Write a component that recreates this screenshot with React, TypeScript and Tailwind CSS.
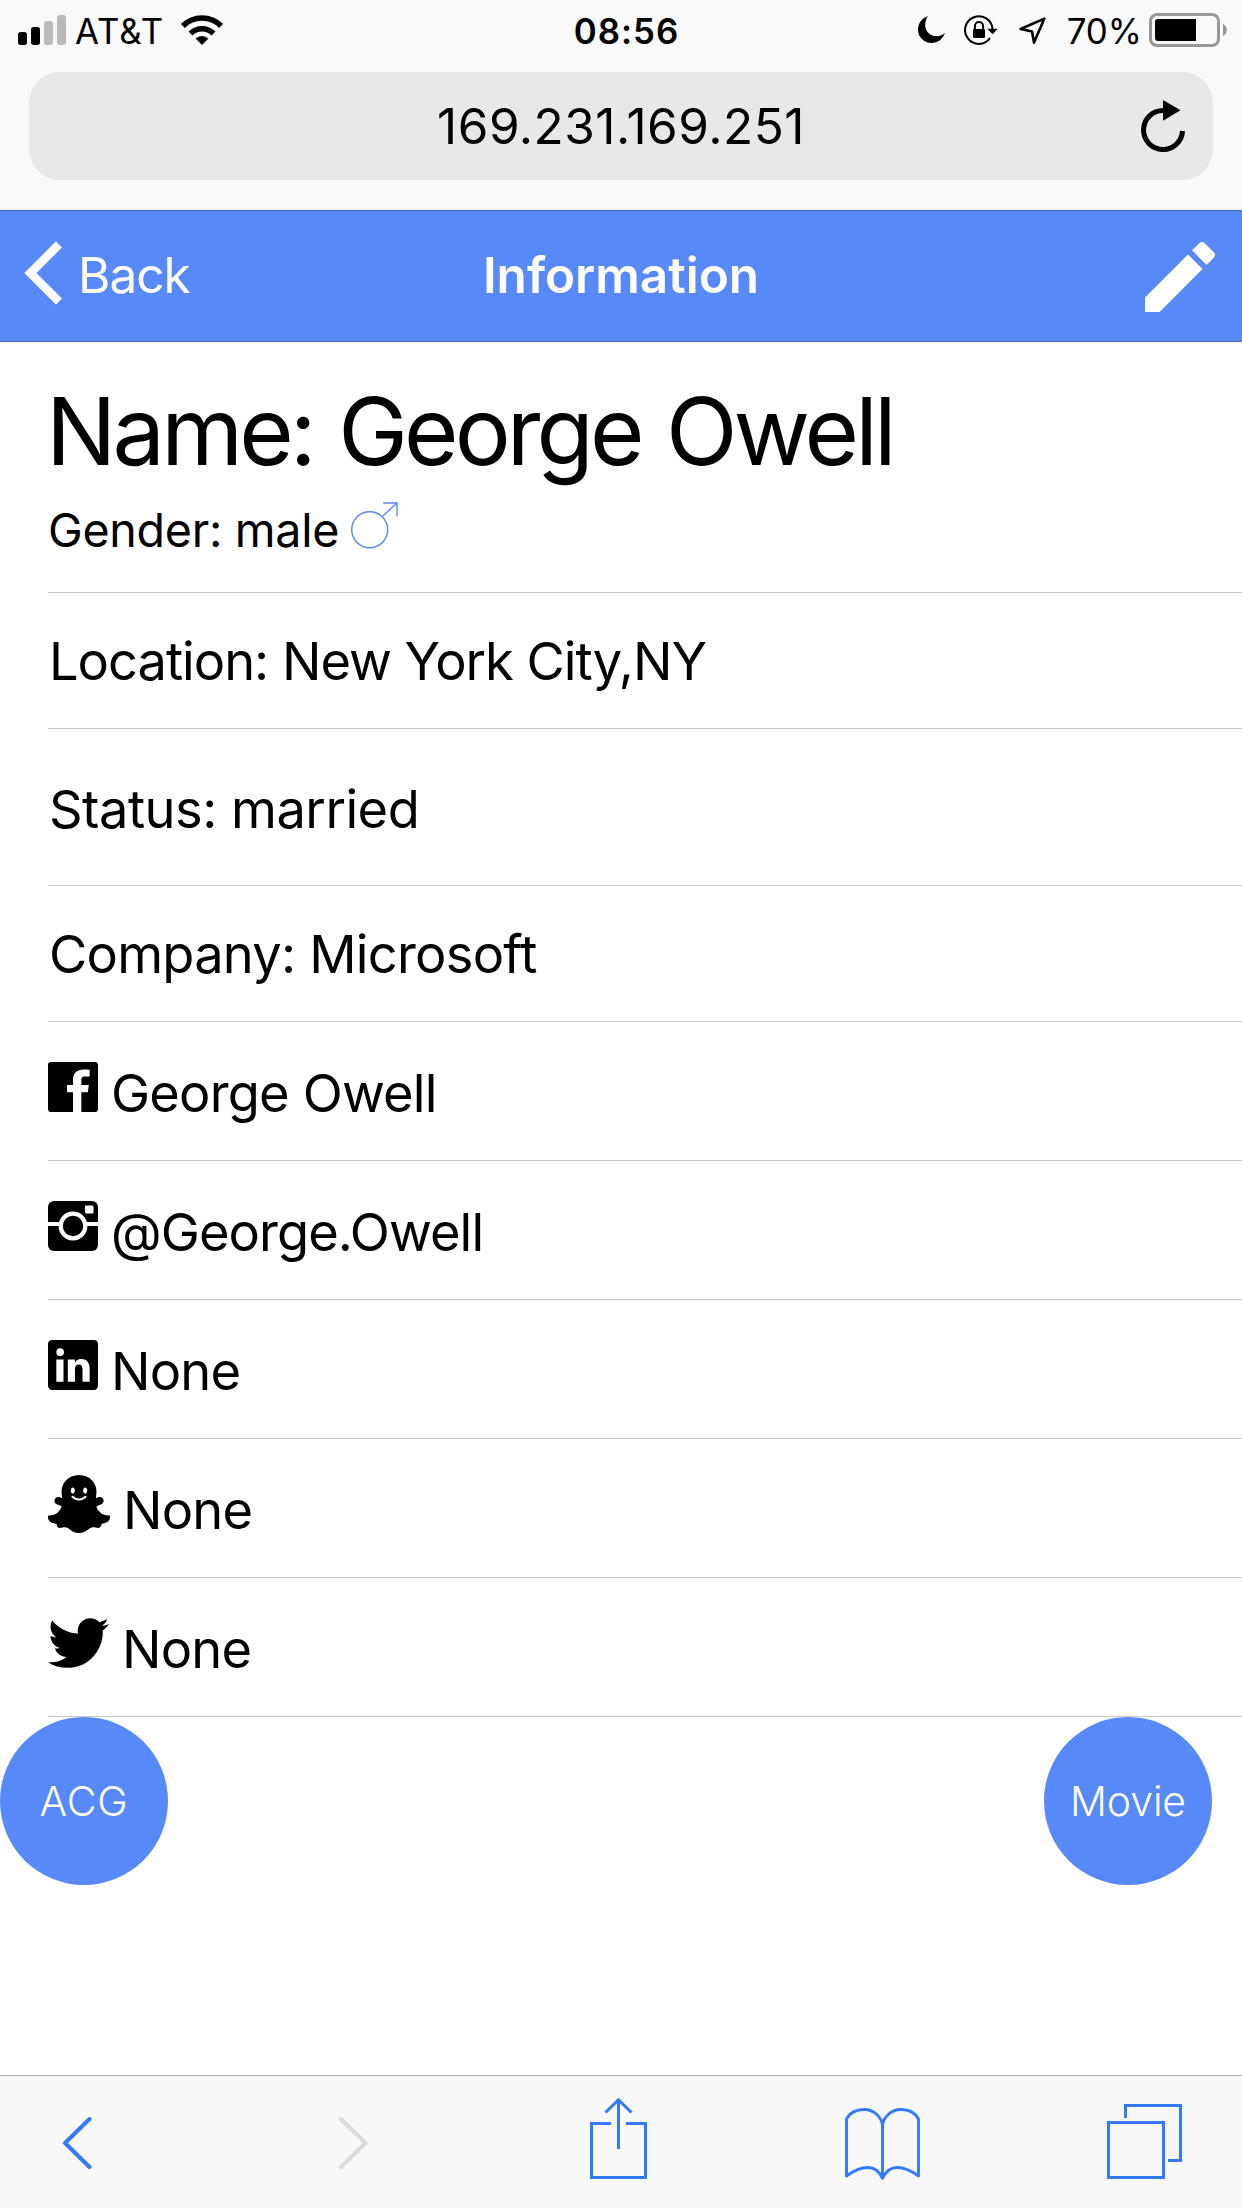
import React from 'react';
import { IoLogoFacebook, IoLogoLinkedin, IoLogoSnapchat, IoLogoTwitter, IoMdCreate } from 'react-icons/io';

const SignalIcon = () => (
  <svg width="48" height="30" viewBox="0 0 48 30">
    <rect x="0" y="17" width="9" height="13" rx="2.7" fill="#000" />
    <rect x="13" y="12" width="9" height="18" rx="2.7" fill="#000" />
    <rect x="26" y="6" width="9" height="24" rx="2.7" fill="#bababa" />
    <rect x="39" y="0" width="9" height="30" rx="2.7" fill="#bababa" />
  </svg>
);

const WifiIcon = () => (
  <svg width="42" height="30" viewBox="0 0 42 30" fill="none" stroke="#000">
    <path d="M1.9 10.9A27 27 0 0 1 40.1 10.9" strokeWidth="5.6" />
    <path d="M9.5 18.5A16.3 16.3 0 0 1 32.5 18.5" strokeWidth="5.6" />
    <path d="M21 30L14.6 23.6A9 9 0 0 1 27.4 23.6Z" fill="#000" stroke="none" />
  </svg>
);

const MoonIcon = () => (
  <svg width="27" height="27" viewBox="0 0 27 27">
    <path d="M10 0C4 9 8 20 19 20.3C22 20.3 25 18.5 27 17C24.5 23.5 19.5 27 13.5 27A13.5 13.5 0 0 1 0 13.5C0 7.5 4 2 10 0Z" />
  </svg>
);

const RotationLockIcon = () => (
  <svg width="34" height="30" viewBox="0 0 34 30" fill="none" stroke="#000" strokeWidth="2">
    <path d="M28.6 14A13.8 13.8 0 1 0 26 23.2" />
    <path d="M23.3 13.8H33.8L28.6 19.2Z" fill="#000" stroke="none" />
    <rect x="9" y="14" width="12" height="9" rx="1.2" fill="#000" stroke="none" />
    <path d="M10.9 15V11A4.1 4.1 0 0 1 19.1 11V15" />
  </svg>
);

const LocationIcon = () => (
  <svg width="28" height="28" viewBox="0 0 28 28" fill="none" stroke="#000" strokeWidth="2.6" strokeLinejoin="round">
    <path d="M25.4 1.6L1.6 12L13 14.4L15 25.6Z" />
  </svg>
);

const BatteryIcon = () => (
  <svg width="78" height="34" viewBox="0 0 78 34">
    <rect x="1.5" y="1.5" width="68" height="31" rx="6.5" fill="none" stroke="#979797" strokeWidth="3" />
    <path d="M6 9a3 3 0 0 1 3-3H47V28H9a3 3 0 0 1-3-3Z" />
    <path d="M74 11C79 13 79 21 74 23Z" fill="#979797" />
  </svg>
);

const ReloadIcon = () => (
  <svg width="44" height="52" viewBox="0 0 44 52">
    <path d="M41.5 31A19.5 19.5 0 1 1 22 10.5" fill="none" stroke="#000" strokeWidth="5" />
    <path d="M22 0L39.5 10.3L22 20.7Z" />
  </svg>
);

const MaleIcon = () => (
  <svg width="48" height="48" viewBox="0 0 48 48" fill="none" stroke="#5889f8" strokeWidth="1.4">
    <circle cx="18.7" cy="27.7" r="18" />
    <path d="M31.6 14.3L45.6 1.2M32.3 1H46V14.5" />
  </svg>
);

const InstagramIcon = () => (
  <svg width="50" height="50" viewBox="0 0 50 50">
    <rect width="50" height="50" rx="6" />
    <path d="M0 23H50" stroke="#fff" strokeWidth="4" />
    <circle cx="25" cy="25" r="12.3" stroke="#fff" strokeWidth="4.2" />
    <rect x="37" y="4.5" width="8.5" height="8" rx="1.3" fill="#fff" />
  </svg>
);

const ShareIcon = () => (
  <svg width="57" height="81" viewBox="0 0 57 81" fill="none" stroke="#327af8" strokeWidth="3">
    <path d="M21 25.5H1.5V79.5H55.5V25.5H36" />
    <path d="M28.5 2V51M15.5 14.5L28.5 1.8L41.5 14.5" />
  </svg>
);

const BookIcon = () => (
  <svg width="75" height="72" viewBox="0 0 75 72" fill="none" stroke="#327af8" strokeWidth="2.9" strokeLinejoin="round">
    <path d="M1.5 11C5 4.5 12 1.5 19 1.5C28.5 1.5 37.5 9 37.5 19C37.5 9 46.5 1.5 56 1.5C63 1.5 70 4.5 73.5 11V68C68 64 60.5 59.5 52 59.5C45.5 59.5 41 63 37.5 70.3C34 63 29.5 59.5 23 59.5C14.5 59.5 7 64 1.5 68Z" />
    <path d="M37.5 15V70" />
  </svg>
);

const TabsIcon = () => (
  <svg width="75" height="75" viewBox="0 0 75 75" fill="none" stroke="#327af8" strokeWidth="3">
    <rect x="1.5" y="18.5" width="55" height="55" />
    <path d="M18.5 14V1.5H73.5V56.5H61" />
  </svg>
);

const Row = ({ className, children }: { className: string; children: React.ReactNode }) => (
  <div className={`ml-12 flex items-center border-b border-[#c8c8c8] pl-[1px] text-[52.4px] ${className}`}>{children}</div>
);

const SocialRow = ({ icon, className = 'tracking-[-0.8px]', text }: { icon: React.ReactNode; className?: string; text: string }) => (
  <div className="ml-12 h-[139px] flex items-center gap-[13px] border-b border-[#c8c8c8]">
    <div className="-mt-2">{icon}</div>
    <span className={`pt-1 text-[52.4px] ${className}`}>{text}</span>
  </div>
);

export default function App() {
  return (
    <div className="w-[1242px] h-[2208px] flex flex-col overflow-hidden bg-white text-black font-['Inter',sans-serif] leading-none whitespace-nowrap">
      {/* Browser chrome */}
      <div className="h-[210px] bg-[#f9f9f9]">
        <div className="h-[60px] grid grid-cols-[1fr_auto_1fr] items-center pt-[3px]">
          <div className="flex items-center pl-[18px]">
            <div className="-mt-[3px]"><SignalIcon /></div>
            <span className="ml-[9px] text-[34.8px] tracking-[1px]">AT&amp;T</span>
            <div className="ml-[17px] -mt-[3px]"><WifiIcon /></div>
          </div>
          <span className="ml-[11px] text-[34.8px] font-semibold tracking-[1px]">08:56</span>
          <div className="flex items-center justify-end pr-[15px]">
            <div className="-mt-[3px]"><MoonIcon /></div>
            <div className="ml-[19px] -mt-[3px]"><RotationLockIcon /></div>
            <div className="ml-[21px]"><LocationIcon /></div>
            <span className="ml-5 text-[34.8px]">70%</span>
            <div className="ml-[7px] -mt-[3px]"><BatteryIcon /></div>
          </div>
        </div>
        <div className="mt-3 mx-[29px] h-[108px] grid grid-cols-[1fr_auto_1fr] items-center rounded-[31px] bg-[#e6e8ea]">
          <span />
          <span className="pt-[2px] text-[49.5px] tracking-[0.5px]">169.231.169.251</span>
          <div className="justify-self-end mr-7"><ReloadIcon /></div>
        </div>
      </div>

      {/* App header */}
      <header className="h-[132px] grid grid-cols-[1fr_auto_1fr] items-center bg-[#5889f8] border-y border-[#4468b8] text-white">
        <div className="flex items-center pl-6">
          <svg width="38" height="64" viewBox="0 0 38 64" fill="none" stroke="#fff" strokeWidth="8.6" className="-mt-[7px]">
            <path d="M35 3.4L6.4 32L35 60.6" />
          </svg>
          <span className="ml-4 text-[49.5px] tracking-[-1px]">Back</span>
        </div>
        <span className="text-[49.5px] font-semibold">Information</span>
        <IoMdCreate className="justify-self-end mt-[2px] mr-[27px] w-[70px] h-[70px]" viewBox="64 64 384 384" />
      </header>

      {/* Profile */}
      <main className="flex-1">
        <div className="ml-12 h-[251px] border-b border-[#c8c8c8]">
          <h1 className="pt-[43px] -ml-[2px] text-[93.5px] tracking-[-3.9px] [word-spacing:3px]">Name: George Owell</h1>
          <div className="flex items-center pt-5">
            <span className="pt-2 text-[46.6px] tracking-[-0.3px]">Gender: male</span>
            <div className="ml-3"><MaleIcon /></div>
          </div>
        </div>
        <Row className="h-[136px] pt-[2px] tracking-[-1px]"><span>Location: New York City,NY</span></Row>
        <Row className="h-[157px] pt-1 tracking-[-0.5px]"><span>Status: married</span></Row>
        <Row className="h-[136px] pt-[2px] tracking-[-0.75px]"><span>Company: Microsoft</span></Row>
        <SocialRow icon={<IoLogoFacebook className="w-[50px] h-[50px]" viewBox="64 64 384 384" />} text="George Owell" />
        <SocialRow className="tracking-[-0.9px]" icon={<InstagramIcon />} text="@George.Owell" />
        <SocialRow icon={<IoLogoLinkedin className="w-[50px] h-[50px]" viewBox="64 64 384 384" />} text="None" />
        <SocialRow icon={<IoLogoSnapchat className="w-[62px] h-[58px]" viewBox="16 32 480 448" />} text="None" />
        <SocialRow icon={<IoLogoTwitter className="w-[61px] h-[50px]" viewBox="20 64 472 384" />} text="None" />

        <div className="flex justify-between pr-[30px] text-white text-[41px]">
          <button className="size-[168px] rounded-full bg-[#5889f8] font-[350] tracking-[0.7px]">ACG</button>
          <button className="size-[168px] rounded-full bg-[#5889f8] font-[350] tracking-[-0.1px]">Movie</button>
        </div>
      </main>

      {/* Browser toolbar */}
      <footer className="h-[133px] flex items-start bg-[#f8f8f8] border-t border-[#b2b2b2]">
        <svg width="30" height="54" viewBox="0 0 30 54" fill="none" stroke="#327af8" strokeWidth="4" strokeLinecap="round" strokeLinejoin="round" className="ml-[62px] mt-10">
          <path d="M27.5 3L3 27L27.5 51" />
        </svg>
        <svg width="30" height="54" viewBox="0 0 30 54" fill="none" stroke="#dcdcdc" strokeWidth="4" strokeLinecap="round" strokeLinejoin="round" className="ml-[246px] mt-10">
          <path d="M3 3L27.5 27L3 51" />
        </svg>
        <div className="ml-[222px] mt-[22px]"><ShareIcon /></div>
        <div className="ml-[198px] mt-8"><BookIcon /></div>
        <div className="ml-[187px] mt-7"><TabsIcon /></div>
      </footer>
    </div>
  );
}
